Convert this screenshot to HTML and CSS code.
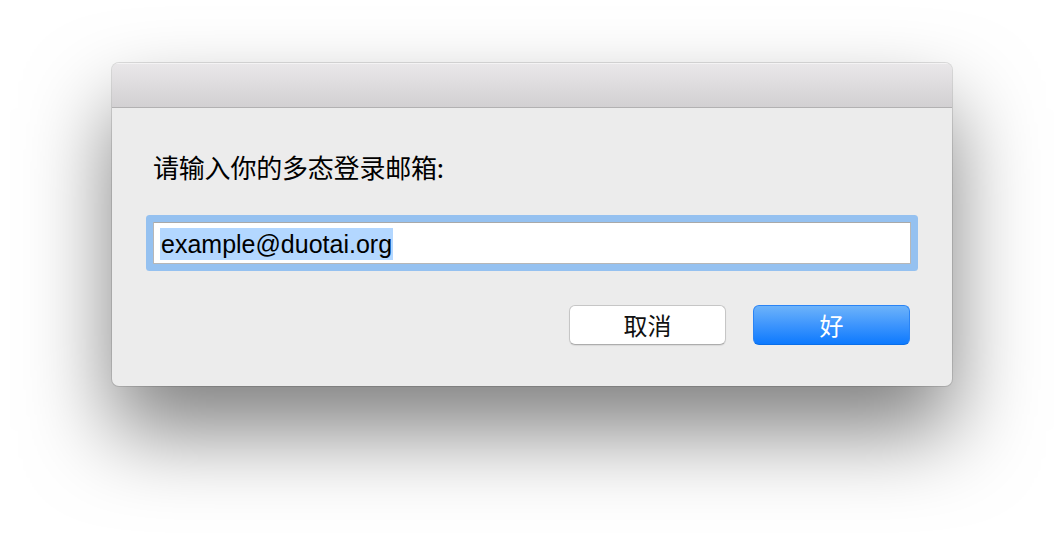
FILE: index.html
```html
<!DOCTYPE html>
<html lang="zh-CN">
<head>
<meta charset="utf-8">
<title>多态登录</title>
<link rel="stylesheet" href="styles.css">
</head>
<body>
<div class="stage">
  <div class="window">
    <div class="titlebar"></div>
    <div class="content">
      <div class="label">请输入你的多态登录邮箱:</div>
      <div class="field">
        <span class="selected">example@duotai.org</span>
      </div>
      <div class="actions">
        <button class="btn btn-cancel">取消</button>
        <button class="btn btn-ok">好</button>
      </div>
    </div>
  </div>
</div>
</body>
</html>
```

FILE: styles.css
```css
html, body {
  margin: 0;
  padding: 0;
  background: #ffffff;
}

.stage {
  width: 1064px;
  height: 546px;
  padding-top: 63px;
  box-sizing: border-box;
  overflow: hidden;
}

.window {
  width: 840px;
  height: 323px;
  margin: 0 auto;
  box-sizing: border-box;
  border-radius: 7px;
  background: #ececec;
  box-shadow: 0 45px 85px rgba(0, 0, 0, 0.5), 0 0 0 1px rgba(0, 0, 0, 0.12);
  display: flex;
  flex-direction: column;
  overflow: hidden;
  font-family: "Liberation Sans", "Noto Sans CJK SC", sans-serif;
}

.titlebar {
  height: 45px;
  box-sizing: border-box;
  background: linear-gradient(to bottom, #e9e7e9 0%, #d2d0d2 100%);
  border-top: 1px solid #f4f3f4;
  border-bottom: 1px solid #b2b1b2;
  flex: none;
}

.content {
  flex: 1;
  padding: 43px 41px 0 41px;
  display: flex;
  flex-direction: column;
}

.label {
  font-family: "Noto Sans CJK SC", sans-serif;
  font-weight: 400;
  font-size: 26px;
  line-height: 32px;
  color: #000;
  letter-spacing: -0.2px;
}

.field {
  margin-top: 39px;
  height: 42px;
  box-sizing: border-box;
  background: #ffffff;
  border: 1px solid #b7b7b7;
  border-top-color: #a9a9a9;
  border-radius: 1px;
  box-shadow: 0 0 0 7px #95c1f0;
  padding: 5px 0 0 6px;
  display: flex;
  align-items: flex-start;
}

.selected {
  background: #b3d7ff;
  color: #000;
  font-size: 25px;
  line-height: 32px;
  height: 32px;
  padding: 0 1px;
}

.actions {
  margin-top: 41px;
  display: flex;
  justify-content: flex-end;
  gap: 27px;
  padding-right: 1px;
}

.btn {
  width: 157px;
  height: 40px;
  box-sizing: border-box;
  border-radius: 6px;
  font-family: "Noto Sans CJK SC", sans-serif;
  font-size: 24px;
  line-height: 38px;
  padding: 0;
  cursor: default;
}

.btn-cancel {
  background: #ffffff;
  color: #111111;
  border: 1px solid #c6c6c6;
  border-bottom-color: #adadad;
  box-shadow: 0 1px 1px rgba(0, 0, 0, 0.08);
}

.btn-ok {
  background: linear-gradient(to bottom, #6db3fa 0%, #3d95fd 50%, #0e7afe 100%);
  color: #ffffff;
  border: 1px solid #2a84f5;
  border-bottom-color: #0a6ee8;
}
```
